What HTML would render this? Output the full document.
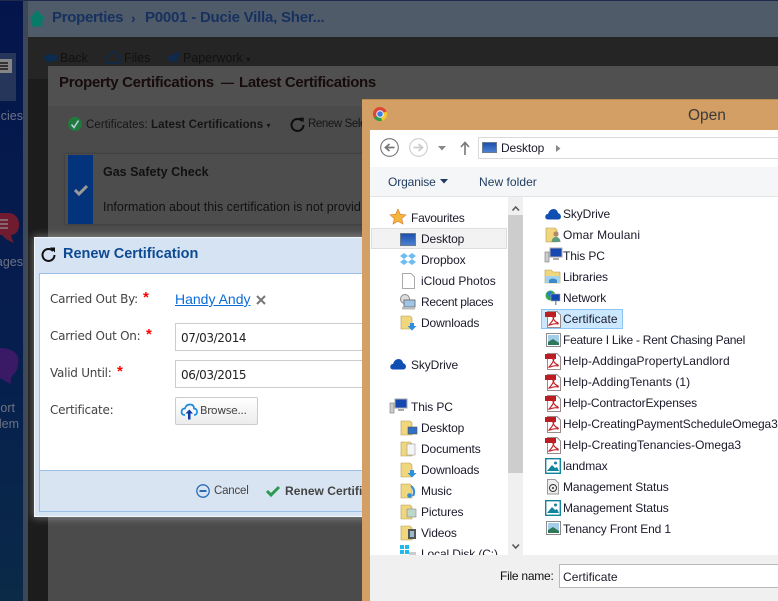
<!DOCTYPE html>
<html><head><meta charset="utf-8">
<style>
html,body{margin:0;padding:0;width:778px;height:601px;overflow:hidden;background:#4a4a4a}
#r{position:relative;width:778px;height:601px;overflow:hidden;font-family:"Liberation Sans",sans-serif}
.a{position:absolute}
.t{position:absolute;white-space:nowrap;line-height:16px}
.f{font-size:12px;color:#1a1a2a;letter-spacing:-.12px}
.l{font-family:"DejaVu Sans",sans-serif;font-size:12px;color:#444;letter-spacing:-.25px}
.st{font-size:15px;color:#f00;font-weight:bold}
svg{position:absolute;overflow:visible}
</style></head><body><div id="r">

<!-- sidebar -->
<div class="a" style="left:0;top:0;width:23px;height:601px;background:linear-gradient(#04154c,#061f4e 60%,#0a2a48)"></div>
<div class="a" style="left:23px;top:0;width:5px;height:601px;background:#3d4756"></div>
<div class="a" style="left:0;top:53px;width:16px;height:48px;background:#26355a"></div>
<div class="a" style="left:0;top:59px;width:12px;height:14px;background:#858585"></div>
<div class="a" style="left:0;top:62px;width:8px;height:1.5px;background:#333"></div>
<div class="a" style="left:0;top:65px;width:8px;height:1.5px;background:#333"></div>
<div class="a" style="left:0;top:68px;width:8px;height:1.5px;background:#333"></div>
<div class="t" style="right:755px;top:108px;font-size:12.5px;color:#6d7284">ncies</div>
<svg style="left:0;top:212px" width="23" height="36"><path d="M0 1H10Q19 3 19 13Q19 22 11 23Q12 28 14 31Q6 28 2 23H0Z" fill="#6f1c30"/><path d="M0 8H8M0 12H8M0 16H8" stroke="#8e7b84" stroke-width="1.5"/></svg>
<div class="t" style="right:755px;top:254px;font-size:12.5px;color:#6d7284">ages</div>
<svg style="left:0;top:347px" width="23" height="48"><path d="M0 1Q14 1 18 10Q20 22 12 29Q10 32 11 37Q5 34 0 31Z" fill="#3a1a66"/></svg>
<div class="t" style="right:763px;top:400px;font-size:12.5px;color:#6d7284">ort</div>
<div class="t" style="right:759px;top:416px;font-size:12.5px;color:#6d7284">lem</div>

<!-- header -->
<div class="a" style="left:28px;top:1px;width:750px;height:36px;background:#505b6a"></div>
<div class="a" style="left:0;top:0;width:778px;height:1px;background:#1d2a4a"></div>
<svg style="left:29px;top:10px" width="17" height="17"><path d="M8 0L16.500 9H13.500V16.500H3V9H0Z" fill="#0a7a68"/></svg>
<div class="t" style="left:52px;top:8px;font-size:15px;line-height:20px;font-weight:bold;color:#17315f;letter-spacing:-.3px">Properties</div>
<div class="t" style="left:131px;top:8px;font-size:14px;line-height:20px;font-weight:bold;color:#17315f">›</div>
<div class="t" style="left:145px;top:8px;font-size:15px;line-height:20px;font-weight:bold;color:#17315f;letter-spacing:-.22px">P0001 - Ducie Villa, Sher...</div>

<!-- dark back -->
<div class="a" style="left:28px;top:37px;width:750px;height:564px;background:#1c1c1c"></div>
<div class="a" style="left:28px;top:37px;width:750px;height:42px;background:#252525"></div>
<svg style="left:43px;top:52px" width="14" height="12"><path d="M7 0V3H14V9H7V12L0 6Z" fill="#0c2b50"/></svg>
<div class="t" style="left:60px;top:50px;font-size:12.5px;color:#111">Back</div>
<svg style="left:105px;top:51px" width="17" height="13"><path d="M4 12Q0 12 .6 8Q1 5.500 4 5.500Q5.500 1 9.500 1Q13 1.500 13 5Q16.500 6 16 9.500Q15.500 12 13 12Z" fill="none" stroke="#0b2a4e" stroke-width="1.500"/></svg>
<div class="t" style="left:124px;top:50px;font-size:12.5px;color:#111">Files</div>
<svg style="left:166px;top:51px" width="14" height="13"><path d="M14 0L0 7L4 8.500L5 13L7.500 10L10.500 11.500Z" fill="#0e2a4e"/></svg>
<div class="t" style="left:183px;top:50px;font-size:12.5px;color:#111">Paperwork <span style="font-size:8px">▾</span></div>

<!-- panel -->
<div class="a" style="left:48px;top:66px;width:730px;height:535px;background:#4b4b4b"></div>
<div class="a" style="left:48px;top:66px;width:730px;height:40px;background:#505050"></div>
<div class="t" style="left:59px;top:74px;font-size:15px;line-height:18px;font-weight:bold;color:#170b0b;letter-spacing:-.3px">Property Certifications</div>
<div class="t" style="left:221px;top:74px;font-size:13px;line-height:18px;font-weight:bold;color:#170b0b">—</div>
<div class="t" style="left:239px;top:74px;font-size:15px;line-height:18px;font-weight:bold;color:#170b0b;letter-spacing:-.35px">Latest Certifications</div>
<svg style="left:68px;top:117px" width="14" height="14"><circle cx="7" cy="7" r="7" fill="#1f7a3c"/><path d="M3.500 7.500L6 10.500L10.500 3.500" stroke="#bcd" stroke-width="1.600" fill="none"/></svg>
<div class="t" style="left:86px;top:117px;font-size:11.500px;color:#151515;letter-spacing:.08px">Certificates: <b>Latest Certifications</b> <span style="font-size:8px">▾</span></div>
<svg style="left:290px;top:117px" width="15" height="15"><path d="M12 4A6 6 0 1 0 13.500 8" fill="none" stroke="#0d0d0d" stroke-width="2"/><path d="M9 .8L13.800 .6L13.600 5.400Z" fill="#0d0d0d"/></svg>
<div class="t" style="left:308px;top:116px;font-size:11.5px;color:#151515;letter-spacing:-.4px">Renew Sele</div>
<div class="a" style="left:65px;top:154px;width:300px;height:70px;background:#4d4d4d;box-shadow:0 0 2px #333"></div>
<div class="a" style="left:68px;top:155px;width:25px;height:69px;background:#03337a"></div>
<svg style="left:74px;top:184px" width="14" height="12"><path d="M1 6L5 10L13 2" fill="none" stroke="#9a9a9a" stroke-width="3"/></svg>
<div class="t" style="left:103px;top:164px;font-size:12.500px;font-weight:bold;color:#111;letter-spacing:0">Gas Safety Check</div>
<div class="t" style="left:103px;top:199px;font-size:12.500px;color:#111;letter-spacing:0">Information about this certification is not provid</div>

<!-- renew dialog -->
<div class="a" style="left:34px;top:237px;width:340px;height:280px;background:#d6e3f3;box-shadow:0 0 8px 1px rgba(255,255,255,.35);border:1px solid #f3f6fa;box-sizing:border-box"></div>
<svg style="left:41px;top:247px" width="15" height="15"><path d="M12 4A6 6 0 1 0 13.500 8" fill="none" stroke="#111" stroke-width="2"/><path d="M9 .5L14 .5L14 5.500Z" fill="#111"/></svg>
<div class="t" style="left:63px;top:245px;font-size:14.500px;line-height:18px;font-weight:bold;color:#0e4a94">Renew Certification</div>
<div class="a" style="left:39px;top:273px;width:340px;height:198px;background:#fff;border:1px solid #9dc0e8;box-sizing:border-box"></div>
<div class="a" style="left:39px;top:470px;width:340px;height:42px;background:#d8e4f2;border:1px solid #9dc0e8;box-sizing:border-box"></div>

<div class="t l" style="left:50px;top:291px">Carried Out By:</div>
<div class="t st" style="left:143px;top:290px">*</div>
<div class="t" style="left:175px;top:291px;font-size:14px;color:#0a6cd8;text-decoration:underline">Handy Andy</div>
<svg style="left:256px;top:295px" width="10" height="10"><path d="M1 1L9 9M9 1L1 9" stroke="#777" stroke-width="2"/></svg>
<div class="t l" style="left:50px;top:328px">Carried Out On:</div>
<div class="t st" style="left:146px;top:327px">*</div>
<div class="t l" style="left:50px;top:365px">Valid Until:</div>
<div class="t st" style="left:117px;top:364px">*</div>
<div class="t l" style="left:50px;top:402px">Certificate:</div>
<div class="a" style="left:175px;top:323px;width:200px;height:28px;border:1px solid #ccc;box-sizing:border-box"></div>
<div class="a" style="left:175px;top:360px;width:200px;height:28px;border:1px solid #ccc;box-sizing:border-box"></div>
<div class="t" style="left:181px;top:330px;font-family:'DejaVu Sans',sans-serif;font-size:12px;color:#222;letter-spacing:-.4px">07/03/2014</div>
<div class="t" style="left:181px;top:367px;font-family:'DejaVu Sans',sans-serif;font-size:12px;color:#222;letter-spacing:-.4px">06/03/2015</div>
<div class="a" style="left:175px;top:397px;width:83px;height:28px;border:1px solid #ccc;border-radius:2px;box-sizing:border-box;background:linear-gradient(#fff,#ececec)"></div>
<svg style="left:181px;top:403px" width="17" height="17"><path d="M4 12Q0 12 .7 8Q1 5.500 4 5.500Q5 1.500 9 1.500Q13 1.500 13 5.500Q16.500 6 16 9.500Q15.500 12 13 12" fill="none" stroke="#1a8ae0" stroke-width="1.700"/><path d="M8.300 6.500L12 10.500H9.500V16.500H7V10.500H4.500Z" fill="#0d3ca8"/></svg>
<div class="t" style="left:200px;top:403px;font-family:'DejaVu Sans',sans-serif;font-size:11px;color:#444;letter-spacing:-.45px">Browse...</div>
<svg style="left:196px;top:484px" width="14" height="14"><circle cx="7" cy="7" r="6.200" fill="none" stroke="#2a6cb8" stroke-width="1.300"/><path d="M3.500 7H10.500" stroke="#2a6cb8" stroke-width="2"/></svg>
<div class="t" style="left:214px;top:483px;font-size:11.5px;color:#444;letter-spacing:-.2px">Cancel</div>
<svg style="left:266px;top:485px" width="14" height="12"><path d="M1 6L5 10L13 2" fill="none" stroke="#2c9a50" stroke-width="3"/></svg>
<div class="t" style="left:285px;top:483px;font-size:12px;font-weight:bold;color:#444;letter-spacing:.05px">Renew Certification</div>

<!-- Open dialog -->
<div class="a" style="left:362px;top:99px;width:416px;height:502px;background:#d49f64;border-top:1px solid #bb8a52;box-sizing:border-box"></div>
<svg style="left:373px;top:107px" width="14" height="14"><circle cx="7" cy="7" r="7" fill="#dd4438"/><path d="M7 7L1 11A7 7 0 0 0 9 13.800Z" fill="#2e9f4a"/><path d="M7 7L9 13.800A7 7 0 0 0 13.600 4.500Z" fill="#f3c92c"/><circle cx="7" cy="7" r="3.300" fill="#3a7ee0" stroke="#eef" stroke-width="1"/></svg>
<div class="t" style="left:688px;top:107px;font-size:15.5px;line-height:18px;color:#3a3a3a;letter-spacing:0">Open</div>
<div class="a" style="left:370px;top:130px;width:408px;height:471px;background:#fff"></div>

<!-- nav bar -->
<svg style="left:380px;top:138px" width="20" height="20"><circle cx="9.500" cy="9.500" r="8.800" fill="#fff" stroke="#777" stroke-width="1.100"/><path d="M14.500 9.500H6M9.500 6L5.500 9.500L9.500 13" fill="none" stroke="#777" stroke-width="1.800"/></svg>
<svg style="left:409px;top:138px" width="20" height="20"><circle cx="9.500" cy="9.500" r="8.800" fill="#fff" stroke="#ccc" stroke-width="1.100"/><path d="M4.500 9.500H13M9.500 6L13.500 9.500L9.500 13" fill="none" stroke="#ccc" stroke-width="1.800"/></svg>
<svg style="left:438px;top:146px" width="9" height="5"><path d="M0 0H8L4 4.500Z" fill="#888"/></svg>
<svg style="left:460px;top:141px" width="11" height="14"><path d="M5 1V14M1 6L5 1.500L9 6" fill="none" stroke="#777" stroke-width="1.600"/></svg>
<div class="a" style="left:478px;top:137px;width:300px;height:22px;border:1px solid #d9d9d9;border-right:0;box-sizing:border-box;background:#fff"></div>
<div class="a" style="left:482px;top:142px;width:15px;height:11px;background:linear-gradient(#1d4fae,#4b80d0);border:1px solid #6a7a90;box-sizing:border-box"></div>
<div class="t f" style="left:501px;top:140px">Desktop</div>
<svg style="left:556px;top:145px" width="5" height="7"><path d="M0 0L4.500 3.500L0 7Z" fill="#888"/></svg>

<!-- toolbar -->
<div class="a" style="left:370px;top:167px;width:408px;height:30px;background:#f5f6f7;border-bottom:1px solid #e4e4e4;box-sizing:border-box"></div>
<div class="t f" style="left:388px;top:174px;color:#1f3a5f">Organise</div>
<svg style="left:440px;top:179px" width="9" height="5"><path d="M0 0H8L4 4.500Z" fill="#1f3a5f"/></svg>
<div class="t f" style="left:479px;top:174px;color:#1f3a5f;letter-spacing:.05px">New folder</div>

<!-- tree scrollbar -->
<div class="a" style="left:508px;top:197px;width:15px;height:358px;background:#f0f0f0"></div>
<div class="a" style="left:508px;top:215px;width:15px;height:258px;background:#cdcdcd"></div>
<svg style="left:512px;top:206px" width="8" height="5"><path d="M.5 4.500L3.700 1L7 4.500" fill="none" stroke="#555" stroke-width="1.500"/></svg>
<svg style="left:512px;top:544px" width="8" height="5"><path d="M.5 .5L3.700 4L7 .5" fill="none" stroke="#555" stroke-width="1.500"/></svg>

<!-- left tree -->
<svg style="left:390px;top:209px" width="16" height="16"><path d="M8 0L10.300 5.300L16 5.800L11.700 9.500L13 15L8 12.200L3 15L4.300 9.500L0 5.800L5.700 5.300Z" fill="#f5b63c" stroke="#d9762a" stroke-width=".6"/></svg>
<div class="t f" style="left:411px;top:210px;letter-spacing:-.25px">Favourites</div>
<div class="a" style="left:371px;top:228px;width:136px;height:21px;background:#f2f2f2;border:1px solid #dedede;box-sizing:border-box"></div>
<div class="a" style="left:400px;top:233px;width:16px;height:13px;background:linear-gradient(#1d4fae,#4b80d0);border:1px solid #6a7a90;box-sizing:border-box"></div>
<div class="t f" style="left:421px;top:231px">Desktop</div>
<svg style="left:400px;top:253px" width="16" height="14"><path d="M4 0L8 3L4 6L0 3ZM12 0L16 3L12 6L8 3ZM4 6L8 9L4 12L0 9ZM12 6L16 9L12 12L8 9Z" fill="#6fbcef"/></svg>
<div class="t f" style="left:421px;top:252px">Dropbox</div>
<svg style="left:402px;top:273px" width="13" height="16"><path d="M.5 .5H9L12.500 4V15.500H.5Z" fill="#fff" stroke="#aaa"/></svg>
<div class="t f" style="left:421px;top:273px;letter-spacing:0">iCloud Photos</div>
<svg style="left:400px;top:294px" width="16" height="16"><circle cx="5" cy="5" r="4.500" fill="#ddd" stroke="#888"/><rect x="4" y="6" width="11" height="7" fill="#9cc6e8" stroke="#777"/><rect x="2" y="13" width="13" height="2.500" fill="#bbb"/></svg>
<div class="t f" style="left:421px;top:294px;letter-spacing:-.3px">Recent places</div>
<svg style="left:401px;top:315px" width="16" height="16"><path d="M0 1H9L11 3V14H0Z" fill="#f0d77e" stroke="#b59b50" stroke-width=".6"/><path d="M9 8H13V11H15.500L11 15.500L6.500 11H9Z" fill="#2f8fdc"/></svg>
<div class="t f" style="left:421px;top:315px">Downloads</div>

<svg style="left:390px;top:358px" width="16" height="12"><path d="M3.500 11.500Q0 11.500 .3 8.500Q.6 6 3 6Q4.500 1 8.500 1Q12 1 13 5Q16 6 16 9Q15.500 11.500 13 11.500Z" fill="#0f4fb3"/></svg>
<div class="t f" style="left:411px;top:357px">SkyDrive</div>

<svg style="left:390px;top:399px" width="17" height="15"><rect x="5" y="0" width="12" height="9" fill="#1547b0" stroke="#aaa"/><rect x="0" y="4" width="4" height="10" fill="#ccc" stroke="#777" stroke-width=".6"/><rect x="8" y="10" width="6" height="2" fill="#aaa"/></svg>
<div class="t f" style="left:411px;top:399px">This PC</div>

<svg style="left:401px;top:420px" width="16" height="16"><path d="M0 1H9L11 3V15H0Z" fill="#f0d77e" stroke="#b59b50" stroke-width=".6"/><rect x="7" y="7" width="9" height="7" fill="#2f6fc4" stroke="#555" stroke-width=".6"/></svg>
<div class="t f" style="left:421px;top:420px">Desktop</div>
<svg style="left:401px;top:441px" width="16" height="16"><path d="M0 1H9L11 3V15H0Z" fill="#f0d77e" stroke="#b59b50" stroke-width=".6"/><rect x="6" y="3" width="8" height="11" fill="#f5f5f5" stroke="#999" stroke-width=".6"/></svg>
<div class="t f" style="left:421px;top:441px">Documents</div>
<svg style="left:401px;top:462px" width="16" height="16"><path d="M0 1H9L11 3V15H0Z" fill="#f0d77e" stroke="#b59b50" stroke-width=".6"/><path d="M9 8H13V11H15.500L11 15.500L6.500 11H9Z" fill="#2f8fdc"/></svg>
<div class="t f" style="left:421px;top:462px">Downloads</div>
<svg style="left:401px;top:483px" width="16" height="16"><path d="M0 1H9L11 3V15H0Z" fill="#f0d77e" stroke="#b59b50" stroke-width=".6"/><path d="M10 3Q15 7 12 13" fill="none" stroke="#2f8fdc" stroke-width="2"/><circle cx="8.500" cy="12.500" r="2.300" fill="#2f8fdc"/></svg>
<div class="t f" style="left:421px;top:483px">Music</div>
<svg style="left:401px;top:504px" width="16" height="16"><path d="M0 1H9L11 3V15H0Z" fill="#f0d77e" stroke="#b59b50" stroke-width=".6"/><rect x="6" y="5" width="9" height="8" fill="#bcd8c8" stroke="#888" stroke-width=".6"/></svg>
<div class="t f" style="left:421px;top:504px">Pictures</div>
<svg style="left:401px;top:525px" width="16" height="16"><path d="M0 1H9L11 3V15H0Z" fill="#f0d77e" stroke="#b59b50" stroke-width=".6"/><rect x="7" y="4" width="8" height="10" fill="#555"/><rect x="9" y="6" width="4" height="6" fill="#9bc"/></svg>
<div class="t f" style="left:421px;top:525px">Videos</div>
<svg style="left:400px;top:545px" width="16" height="10"><path d="M0 0H4V4H0ZM5 0H9V4H5ZM0 5H4V9H0ZM5 5H9V9H5Z" fill="#22b8e8"/><rect x="9" y="7" width="7" height="3" fill="#ccc"/></svg>
<div class="a" style="left:370px;top:197px;width:138px;height:358px;overflow:hidden"><div class="t f" style="left:51px;top:349px">Local Disk (C:)</div></div>

<!-- file list -->
<svg style="left:545px;top:208px" width="16" height="12"><path d="M3.500 11.500Q0 11.500 .3 8.500Q.6 6 3 6Q4.500 1 8.500 1Q12 1 13 5Q16 6 16 9Q15.500 11.500 13 11.500Z" fill="#0f4fb3"/></svg>
<div class="t f" style="left:563px;top:206px">SkyDrive</div>
<svg style="left:546px;top:227px" width="15" height="16"><path d="M0 1H9L11 3V15H0Z" fill="#f0d77e" stroke="#b59b50" stroke-width=".6"/><circle cx="10" cy="7" r="2.600" fill="#b08a6a"/><path d="M5.500 15Q6 10 10 10Q14 10 14.500 15Z" fill="#5f9a82"/></svg>
<div class="t f" style="left:563px;top:227px;letter-spacing:.15px">Omar Moulani</div>
<svg style="left:545px;top:248px" width="17" height="15"><rect x="5" y="0" width="12" height="9" fill="#1547b0" stroke="#aaa"/><rect x="0" y="4" width="4" height="10" fill="#ccc" stroke="#777" stroke-width=".6"/><rect x="8" y="10" width="6" height="2" fill="#aaa"/></svg>
<div class="t f" style="left:563px;top:248px">This PC</div>
<svg style="left:545px;top:269px" width="16" height="15"><path d="M0 1H6L8 3H15V14H0Z" fill="#f0d77e" stroke="#b59b50" stroke-width=".6"/><path d="M1 7H15V14H1Z" fill="#9fd2ec"/><path d="M4 14V11Q8 8 12 11V14Z" fill="#3f88c8"/></svg>
<div class="t f" style="left:563px;top:269px">Libraries</div>
<svg style="left:545px;top:290px" width="16" height="16"><circle cx="5.500" cy="5.500" r="5" fill="#34a853"/><path d="M2 3L6 1L8 5L5 8Z" fill="#2a78d8"/><rect x="6" y="4" width="9" height="7" fill="#1547b0" stroke="#aaa" stroke-width=".6"/><rect x="10" y="11" width="1.500" height="4" fill="#999"/></svg>
<div class="t f" style="left:563px;top:290px">Network</div>

<div class="a" style="left:541px;top:309px;width:82px;height:20px;background:#cce8ff;border:1px solid #8dc6f5;box-sizing:border-box"></div>
<div class="t f" style="left:563px;top:311px;letter-spacing:.05px">Certificate</div>
<svg style="left:545px;top:311px" width="16" height="17"><g id="p"><path d="M2.500 .5H12L15.500 4V16.500H2.500Z" fill="#fff" stroke="#9b8c8c"/><rect x="0" y="1" width="11" height="5" fill="#bb1d22"/><path d="M4 14Q8 10 9 6Q9 4 8 5Q7.500 8 11 11Q14 12 13 13Q10 12 5 14Z" fill="none" stroke="#c4242a" stroke-width="1.200"/></g></svg>

<svg style="left:546px;top:333px" width="15" height="14"><rect x=".5" y=".5" width="14" height="13" fill="#fff" stroke="#8a8a8a"/><rect x="2" y="2" width="11" height="10" fill="#a4cdea"/><path d="M2 12V9L7 6L13 10V12Z" fill="#2d7858"/></svg>
<div class="t f" style="left:563px;top:332px;letter-spacing:-.25px">Feature I Like - Rent Chasing Panel</div>

<svg style="left:545px;top:353px" width="16" height="17"><use href="#p"/></svg>
<div class="t f" style="left:563px;top:353px;letter-spacing:.07px">Help-AddingaPropertyLandlord</div>
<svg style="left:545px;top:374px" width="16" height="17"><use href="#p"/></svg>
<div class="t f" style="left:563px;top:374px;letter-spacing:.05px">Help-AddingTenants (1)</div>
<svg style="left:545px;top:395px" width="16" height="17"><use href="#p"/></svg>
<div class="t f" style="left:563px;top:395px;letter-spacing:-.15px">Help-ContractorExpenses</div>
<svg style="left:545px;top:416px" width="16" height="17"><use href="#p"/></svg>
<div class="t f" style="left:563px;top:416px;letter-spacing:-.08px">Help-CreatingPaymentScheduleOmega3</div>
<svg style="left:545px;top:437px" width="16" height="17"><use href="#p"/></svg>
<div class="t f" style="left:563px;top:437px;letter-spacing:0">Help-CreatingTenancies-Omega3</div>

<svg style="left:545px;top:458px" width="16" height="16"><g id="q"><rect x=".7" y=".7" width="14.600" height="14.600" fill="#fff" stroke="#12849c" stroke-width="1.400"/><path d="M2 13L7 7L10 10L12 9L14 13Z" fill="#12849c"/><circle cx="10.500" cy="5" r="1.500" fill="#12849c"/></g></svg>
<div class="t f" style="left:563px;top:458px">landmax</div>
<svg style="left:546px;top:479px" width="14" height="16"><path d="M1.500 .5H9L12.500 4V15H1.500Z" fill="#eee" stroke="#999"/><circle cx="7" cy="9" r="3.500" fill="none" stroke="#333"/><circle cx="7" cy="9" r="1" fill="#333"/></svg>
<div class="t f" style="left:563px;top:479px;letter-spacing:-.1px">Management Status</div>
<svg style="left:545px;top:500px" width="16" height="16"><use href="#q"/></svg>
<div class="t f" style="left:563px;top:500px;letter-spacing:-.1px">Management Status</div>
<svg style="left:546px;top:521px" width="15" height="14"><rect x=".5" y=".5" width="14" height="13" fill="#fff" stroke="#8a8a8a"/><rect x="2" y="2" width="11" height="10" fill="#a4cdea"/><path d="M2 12V9L7 6L13 10V12Z" fill="#2d7858"/></svg>
<div class="t f" style="left:563px;top:521px;letter-spacing:-.15px">Tenancy Front End 1</div>

<!-- bottom -->
<div class="a" style="left:370px;top:555px;width:408px;height:46px;background:#f0f0f0"></div>
<div class="t f" style="left:500px;top:568px;color:#111;letter-spacing:-.25px">File name:</div>
<div class="a" style="left:559px;top:564px;width:219px;height:24px;background:#fff;border:1px solid #bbb;border-right:0;box-sizing:border-box"></div>
<div class="t f" style="left:563px;top:569px;letter-spacing:.05px">Certificate</div>
</div></body></html>
